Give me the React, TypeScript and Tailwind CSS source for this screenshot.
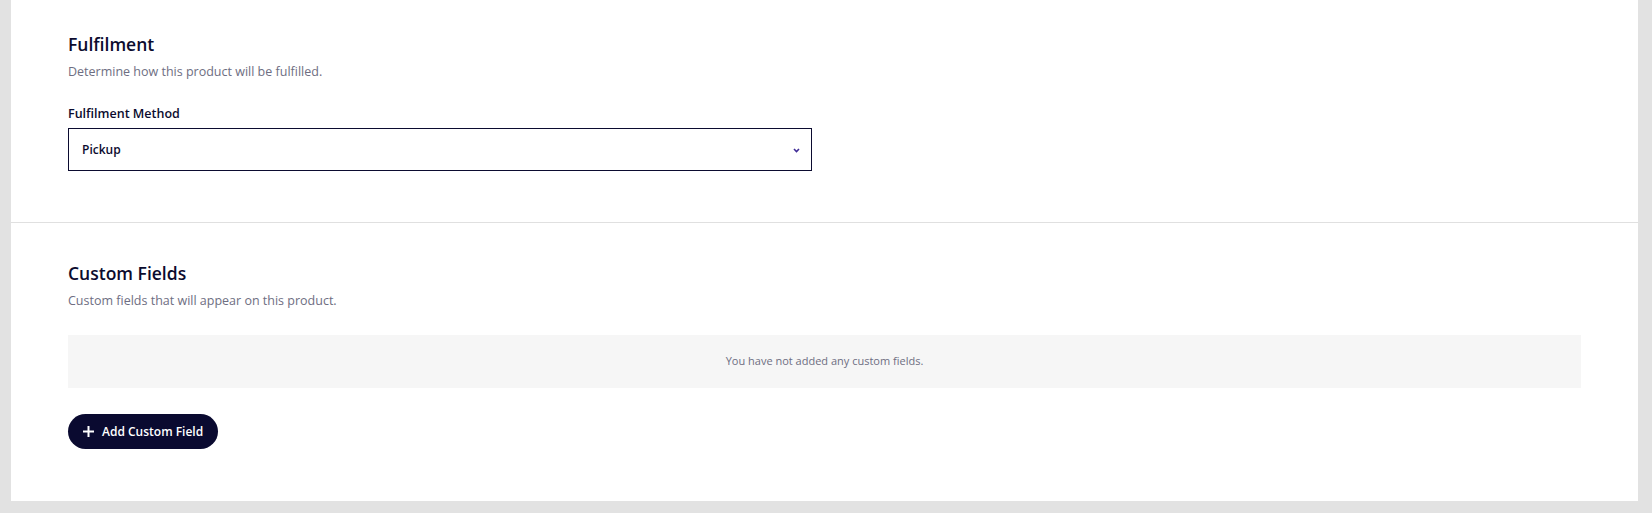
export default function App() {
  return (
    <div className="min-h-[513px] w-full bg-[#e2e2e2] pl-[11px] pr-[14px] pb-[13px] font-['Open_Sans',sans-serif]">
      <div className="bg-white">
        <section className="px-[57px] pt-[32px] pb-[51px]">
          <h2 className="text-[17.5px] leading-[24px] font-semibold text-[#0b0b2e]">Fulfilment</h2>
          <p className="mt-[8px] text-[12.5px] leading-[16px] text-[#6e6e82]">
            Determine how this product will be fulfilled.
          </p>
          <label className="mt-[26px] block text-[12.5px] leading-[16px] font-semibold text-[#0b0b2e]">
            Fulfilment Method
          </label>
          <div className="mt-[6px] flex h-[43px] w-[744px] items-center justify-between border border-[#0b0b30] pl-[13px] pr-[11px]">
            <span className="text-[12px] font-semibold text-[#0b0b2e]">Pickup</span>
            <svg width="7" height="5" viewBox="0 0 7 5" className="mt-[1px]">
              <path d="M1 1 L3.5 3.5 L6 1" stroke="#3f2b96" strokeWidth="1.6" fill="none" />
            </svg>
          </div>
        </section>
        <div className="h-px bg-[#e0e0e0]" />
        <section className="px-[57px] pt-[38px] pb-[52px]">
          <h2 className="text-[17.5px] leading-[24px] font-semibold text-[#0b0b2e]">Custom Fields</h2>
          <p className="mt-[8px] text-[12.5px] leading-[16px] text-[#6e6e82]">
            Custom fields that will appear on this product.
          </p>
          <div className="mt-[26px] flex h-[53px] items-center justify-center bg-[#f6f6f6]">
            <span className="text-[11px] text-[#6e6e82]">You have not added any custom fields.</span>
          </div>
          <button className="mt-[26px] flex h-[35px] items-center gap-[7px] rounded-full bg-[#0a0a30] pl-[14px] pr-[15px] text-[12px] font-semibold text-white">
            <svg width="13" height="13" viewBox="0 0 13 13">
              <path d="M6.5 1v11M1 6.5h11" stroke="white" strokeWidth="2" />
            </svg>
            Add Custom Field
          </button>
        </section>
      </div>
    </div>
  );
}
